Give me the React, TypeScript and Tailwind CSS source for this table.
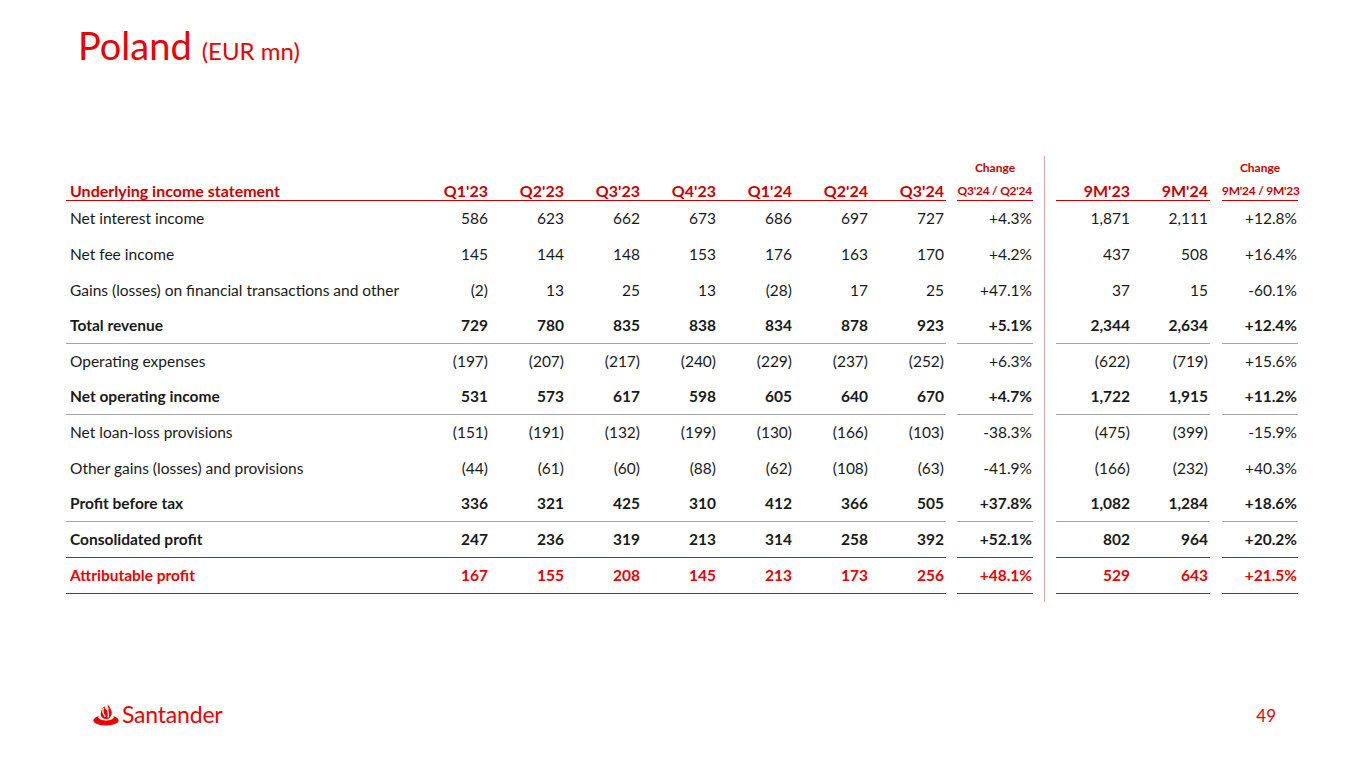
import React from "react";

type Row = {
  label: string;
  q: string[];
  chg: string;
  m: string[];
  mchg: string;
  bold?: boolean;
  red?: boolean;
  line?: "grey" | "red";
};

const rows: Row[] = [
  { label: "Net interest income", q: ["586", "623", "662", "673", "686", "697", "727"], chg: "+4.3%", m: ["1,871", "2,111"], mchg: "+12.8%" },
  { label: "Net fee income", q: ["145", "144", "148", "153", "176", "163", "170"], chg: "+4.2%", m: ["437", "508"], mchg: "+16.4%" },
  { label: "Gains (losses) on financial transactions and other", q: ["(2)", "13", "25", "13", "(28)", "17", "25"], chg: "+47.1%", m: ["37", "15"], mchg: "-60.1%" },
  { label: "Total revenue", q: ["729", "780", "835", "838", "834", "878", "923"], chg: "+5.1%", m: ["2,344", "2,634"], mchg: "+12.4%", bold: true, line: "grey" },
  { label: "Operating expenses", q: ["(197)", "(207)", "(217)", "(240)", "(229)", "(237)", "(252)"], chg: "+6.3%", m: ["(622)", "(719)"], mchg: "+15.6%" },
  { label: "Net operating income", q: ["531", "573", "617", "598", "605", "640", "670"], chg: "+4.7%", m: ["1,722", "1,915"], mchg: "+11.2%", bold: true, line: "grey" },
  { label: "Net loan-loss provisions", q: ["(151)", "(191)", "(132)", "(199)", "(130)", "(166)", "(103)"], chg: "-38.3%", m: ["(475)", "(399)"], mchg: "-15.9%" },
  { label: "Other gains (losses) and provisions", q: ["(44)", "(61)", "(60)", "(88)", "(62)", "(108)", "(63)"], chg: "-41.9%", m: ["(166)", "(232)"], mchg: "+40.3%" },
  { label: "Profit before tax", q: ["336", "321", "425", "310", "412", "366", "505"], chg: "+37.8%", m: ["1,082", "1,284"], mchg: "+18.6%", bold: true, line: "grey" },
  { label: "Consolidated profit", q: ["247", "236", "319", "213", "314", "258", "392"], chg: "+52.1%", m: ["802", "964"], mchg: "+20.2%", bold: true, line: "red" },
  { label: "Attributable profit", q: ["167", "155", "208", "145", "213", "173", "256"], chg: "+48.1%", m: ["529", "643"], mchg: "+21.5%", bold: true, red: true, line: "red" },
];

const quarters = ["Q1'23", "Q2'23", "Q3'23", "Q4'23", "Q1'24", "Q2'24", "Q3'24"];

function Divider() {
  return (
    <div className="w-[23px] flex justify-center self-stretch">
      <div className="w-px bg-[#d9a3a3]" />
    </div>
  );
}

function Flame() {
  return (
    <svg width="26" height="24" viewBox="0 0 26 24" aria-hidden="true">
      <ellipse cx="13" cy="18.4" rx="12.6" ry="5.2" fill="#ec0000" />
      <ellipse cx="13" cy="15.2" rx="7.6" ry="3.2" fill="#ffffff" />
      <path
        d="M13.6 0.4 C16.6 3.6 19.4 6.8 19.4 11 C19.4 15 16.6 17.6 13.2 17.6 C9.8 17.6 7 15 7 11.4 C7 7.8 9.8 5.4 11.6 2.6 C11.9 4.6 12.6 5.8 13.6 7 C14.3 4.8 14.3 2.6 13.6 0.4 Z"
        fill="#ec0000"
        stroke="#ffffff"
        strokeWidth="1.2"
      />
      <path d="M10.6 6.4 C8.8 9.4 10 11.8 11.9 14.2" fill="none" stroke="#ffffff" strokeWidth="1.3" strokeLinecap="round" />
      <path d="M15 6.2 C13.9 9 16.4 11.2 15.2 15" fill="none" stroke="#ffffff" strokeWidth="1.3" strokeLinecap="round" />
    </svg>
  );
}

export default function App() {
  const font = { fontFamily: "Lato, 'Noto Sans', sans-serif" };
  return (
    <div className="w-[1365px] h-[768px] bg-white relative overflow-hidden" style={font}>
      <div className="pl-[78px] pt-[22px] flex items-baseline text-[#ec0000]">
        <span className="text-[38px] leading-[46px]">Poland</span>
        <span className="text-[24px] ml-[10px]">(EUR mn)</span>
      </div>

      <div className="pl-[66px] pt-[87px] text-[15.5px] text-[#1a1a1a]">
        {/* Change label row */}
        <div className="flex h-[23px]">
          <div className="w-[880px]" />
          <div className="w-[11px]" />
          <div className="w-[76px] text-center text-[12px] font-bold text-[#cc0000] leading-[23px]">Change</div>
          <Divider />
          <div className="w-[154px]" />
          <div className="w-[12px]" />
          <div className="w-[76px] text-center text-[12px] font-bold text-[#cc0000] leading-[23px]">Change</div>
        </div>
        {/* Header row */}
        <div className="flex h-[22px] font-bold text-[#cc0000] text-[16px]">
          <div className="w-[880px] flex border-b border-[#cc0000] pr-[2px]">
            <div className="w-[346px] pl-1">Underlying income statement</div>
            {quarters.map((q) => (
              <div key={q} className="w-[76px] text-right">{q}</div>
            ))}
          </div>
          <div className="w-[11px]" />
          <div className="w-[76px] border-b border-[#cc0000] text-[12px] tracking-[-0.25px] whitespace-nowrap text-right pr-[1px] leading-[24px]">Q3'24 / Q2'24</div>
          <Divider />
          <div className="w-[154px] flex border-b border-[#cc0000]">
            <div className="w-[76px] text-right pr-[2px]">9M'23</div>
            <div className="w-[78px] text-right pr-[2px]">9M'24</div>
          </div>
          <div className="w-[12px]" />
          <div className="w-[76px] border-b border-[#cc0000] text-[12px] tracking-[-0.25px] whitespace-nowrap text-right pr-[1px] leading-[24px]">9M'24 / 9M'23</div>
        </div>
        {/* Data rows */}
        {rows.map((r) => {
          const lineCls =
            r.line === "grey" ? "border-b border-[#a6a6a6]" : r.line === "red" ? "border-b border-[#ec0000]" : "";
          const textCls = `${r.bold ? "font-bold" : ""} ${r.red ? "text-[#ec0000]" : ""}`;
          return (
            <div key={r.label} className={`flex h-[35.7px] ${textCls}`}>
              <div className={`w-[880px] flex items-center pr-[2px] ${lineCls}`}>
                <div className="w-[346px] pl-1 whitespace-nowrap">{r.label}</div>
                {r.q.map((v, i) => (
                  <div key={i} className="w-[76px] text-right">{v}</div>
                ))}
              </div>
              <div className="w-[11px]" />
              <div className={`w-[76px] flex items-center justify-end pr-[1px] ${lineCls}`}>{r.chg}</div>
              <Divider />
              <div className={`w-[154px] flex items-center ${lineCls}`}>
                <div className="w-[76px] text-right pr-[2px]">{r.m[0]}</div>
                <div className="w-[78px] text-right pr-[2px]">{r.m[1]}</div>
              </div>
              <div className="w-[12px]" />
              <div className={`w-[76px] flex items-center justify-end pr-[1px] ${lineCls}`}>{r.mchg}</div>
            </div>
          );
        })}
        <div className="flex h-[8px]">
          <div className="w-[880px]" />
          <div className="w-[11px]" />
          <div className="w-[76px]" />
          <Divider />
        </div>
      </div>

      <div className="absolute left-0 right-0 bottom-0 h-[68px] flex items-start justify-between pl-[93px] pr-[89px] pt-[2px]">
        <div className="flex items-end gap-[3px] text-[#ec0000]">
          <Flame />
          <span className="text-[23px] leading-[24px] tracking-[-0.2px]">Santander</span>
        </div>
        <div className="text-[17px] text-[#ec0000] pt-[1px]">49</div>
      </div>
    </div>
  );
}
